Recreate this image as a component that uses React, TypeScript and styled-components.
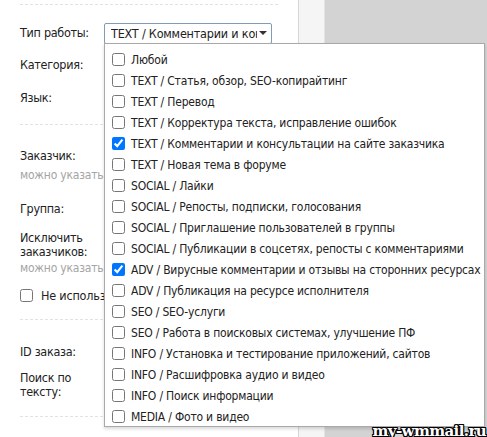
import styled, { createGlobalStyle } from "styled-components";

const GlobalStyle = createGlobalStyle`
  body {
    margin: 0;
    font-family: "DejaVu Sans Condensed", "DejaVu Sans", sans-serif;
    color: #222;
  }
`;

const Page = styled.div`
  position: relative;
  display: flex;
  width: 487px;
  height: 437px;
  overflow: hidden;
`;

const FormPanel = styled.div`
  display: flex;
  flex-direction: column;
  width: 258px;
  padding: 0 20px;
  background: #fff;
  border-right: 1px solid #d6d6d6;
`;

const SidePad = styled.div`
  width: 25px;
  background: #f5f5f5;
  border-right: 1px solid #e4e4e4;
`;

const Backdrop = styled.div`
  flex: 1;
  background: #d3d3d3;
`;

const Divider = styled.div<{ $mt: number }>`
  margin-top: ${({ $mt }) => $mt}px;
  border-top: 1px dashed #e2e2e2;
`;

const Field = styled.div<{ $mt: number }>`
  display: flex;
  align-items: center;
  margin-top: ${({ $mt }) => $mt}px;
  height: 16px;
`;

const TallField = styled.div<{ $mt: number }>`
  display: flex;
  margin-top: ${({ $mt }) => $mt}px;
`;

const Label = styled.div<{ $tight?: boolean }>`
  width: 84px;
  flex-shrink: 0;
  font-size: 12.5px;
  letter-spacing: -0.3px;
  line-height: ${({ $tight }) => ($tight ? "14px" : "16px")};
  white-space: nowrap;
`;

const Hint = styled.div<{ $mt: number }>`
  margin-top: ${({ $mt }) => $mt}px;
  font-size: 12px;
  letter-spacing: -0.2px;
  line-height: 14px;
  color: #a4a4a4;
  white-space: nowrap;
`;

const CheckRow = styled.label<{ $mt: number }>`
  display: flex;
  align-items: center;
  gap: 8px;
  margin-top: ${({ $mt }) => $mt}px;
  height: 16px;
  font-size: 12.5px;
  letter-spacing: -0.2px;
  white-space: nowrap;
`;

const Box = styled.input`
  width: 13px;
  height: 13px;
  margin: 0;
  flex-shrink: 0;
  accent-color: #0075ff;
`;

const Select = styled.div`
  display: flex;
  align-items: center;
  width: 168px;
  height: 21px;
  box-sizing: border-box;
  padding: 0 4px 0 6px;
  border: 1px solid #7f9db9;
  border-radius: 2px;
  font-size: 12.5px;
  letter-spacing: -0.2px;
  background: #fff;
`;

const SelectText = styled.span`
  flex: 1;
  overflow: hidden;
  white-space: nowrap;
`;

const Caret = styled.span`
  width: 0;
  height: 0;
  margin-left: 2px;
  border-left: 4px solid transparent;
  border-right: 4px solid transparent;
  border-top: 4px solid #333;
`;

const Dropdown = styled.div`
  position: absolute;
  left: 104px;
  top: 43px;
  width: 381px;
  height: 384px;
  box-sizing: border-box;
  padding-top: 5px;
  background: #fff;
  border: 1px solid #a9a9a9;
  box-shadow: 0 2px 3px rgba(0, 0, 0, 0.15);
`;

const Option = styled.label`
  display: flex;
  align-items: center;
  gap: 6px;
  height: 21px;
  padding-left: 7px;
  font-size: 12px;
  letter-spacing: -0.2px;
  white-space: nowrap;
`;

const Watermark = styled.div`
  position: absolute;
  right: 1px;
  bottom: -3px;
  font-family: "DejaVu Serif", serif;
  font-weight: bold;
  font-size: 15px;
  letter-spacing: -0.6px;
  color: #fff;
  text-shadow: -1px -1px 0 #000, 1px -1px 0 #000, -1px 1px 0 #000, 1px 1px 0 #000,
    0 1px 0 #000, 0 -1px 0 #000, 1px 0 0 #000, -1px 0 0 #000;
`;

const options: [string, boolean][] = [
  ["Любой", false],
  ["TEXT / Статья, обзор, SEO-копирайтинг", false],
  ["TEXT / Перевод", false],
  ["TEXT / Корректура текста, исправление ошибок", false],
  ["TEXT / Комментарии и консультации на сайте заказчика", true],
  ["TEXT / Новая тема в форуме", false],
  ["SOCIAL / Лайки", false],
  ["SOCIAL / Репосты, подписки, голосования", false],
  ["SOCIAL / Приглашение пользователей в группы", false],
  ["SOCIAL / Публикации в соцсетях, репосты с комментариями", false],
  ["ADV / Вирусные комментарии и отзывы на сторонних ресурсах", true],
  ["ADV / Публикация на ресурсе исполнителя", false],
  ["SEO / SEO-услуги", false],
  ["SEO / Работа в поисковых системах, улучшение ПФ", false],
  ["INFO / Установка и тестирование приложений, сайтов", false],
  ["INFO / Расшифровка аудио и видео", false],
  ["INFO / Поиск информации", false],
  ["MEDIA / Фото и видео", false],
];

export default function App() {
  return (
    <>
      <GlobalStyle />
      <Page>
        <FormPanel>
          <Divider $mt={4} />
          <Field $mt={20}>
            <Label>Тип работы:</Label>
            <Select>
              <SelectText>TEXT / Комментарии и консультации</SelectText>
              <Caret />
            </Select>
          </Field>
          <Field $mt={16}>
            <Label>Категория:</Label>
          </Field>
          <Field $mt={17}>
            <Label>Язык:</Label>
          </Field>
          <Divider $mt={18} />
          <Field $mt={23}>
            <Label>Заказчик:</Label>
          </Field>
          <Hint $mt={4}>можно указать несколько через запятую</Hint>
          <Field $mt={19}>
            <Label>Группа:</Label>
          </Field>
          <TallField $mt={14}>
            <Label $tight>
              Исключить
              <br />
              заказчиков:
            </Label>
          </TallField>
          <Hint $mt={2}>можно указать несколько через запятую</Hint>
          <CheckRow $mt={12}>
            <Box type="checkbox" readOnly />
            Не использовать чёрный список
          </CheckRow>
          <Divider $mt={16} />
          <Field $mt={24}>
            <Label>ID заказа:</Label>
          </Field>
          <TallField $mt={11}>
            <Label $tight>
              Поиск по
              <br />
              тексту:
            </Label>
          </TallField>
          <Divider $mt={17} />
        </FormPanel>
        <SidePad />
        <Backdrop />
        <Dropdown>
          {options.map(([text, checked]) => (
            <Option key={text}>
              <Box type="checkbox" checked={checked} readOnly />
              {text}
            </Option>
          ))}
        </Dropdown>
        <Watermark>my-wmmail.ru</Watermark>
      </Page>
    </>
  );
}
